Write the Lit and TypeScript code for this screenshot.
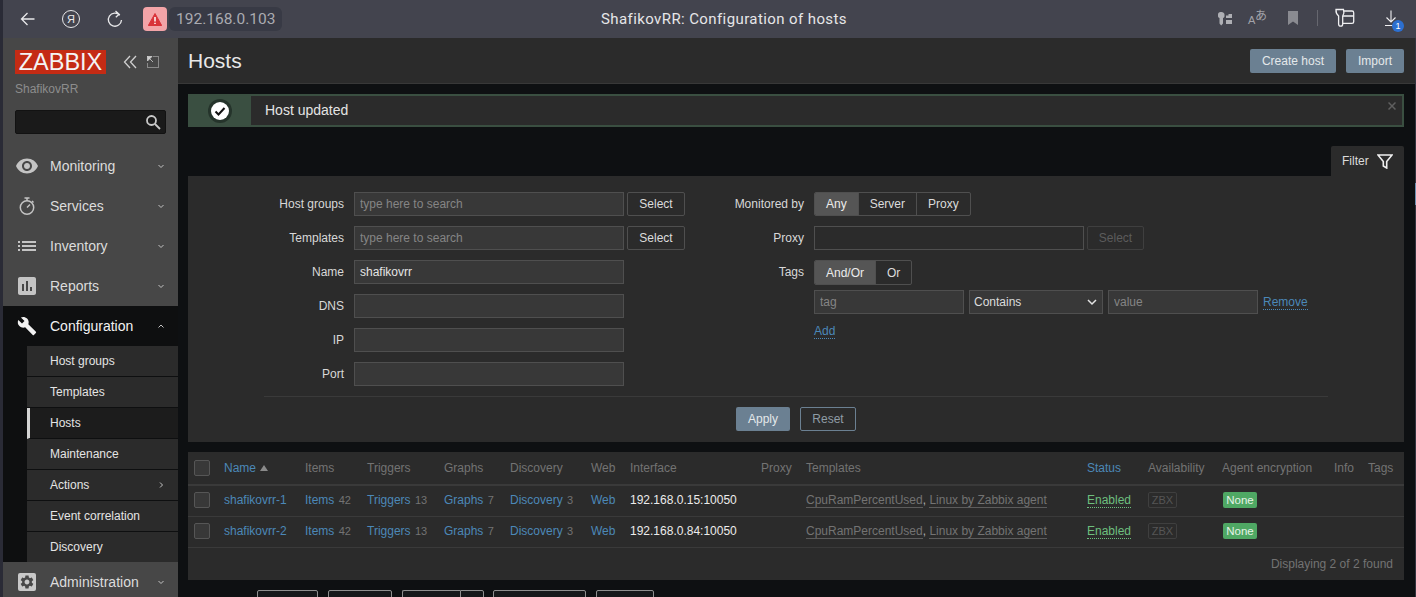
import { LitElement, html, css } from 'lit';
import { customElement } from 'lit/decorators.js';

const ICONS: Record<string, string> = {
  eye: 'M12 4.5C7 4.5 2.7 7.6 1 12c1.7 4.4 6 7.5 11 7.5s9.3-3.1 11-7.5c-1.7-4.4-6-7.5-11-7.5zM12 17c-2.8 0-5-2.2-5-5s2.2-5 5-5 5 2.2 5 5-2.2 5-5 5zm0-8c-1.7 0-3 1.3-3 3s1.3 3 3 3 3-1.3 3-3-1.3-3-3-3z',
  list: 'M3 13h2v-2H3v2zm0 4h2v-2H3v2zm0-8h2V7H3v2zm4 4h14v-2H7v2zm0 4h14v-2H7v2zM7 7v2h14V7H7z',
  chart: 'M19 3H5c-1.1 0-2 .9-2 2v14c0 1.1.9 2 2 2h14c1.1 0 2-.9 2-2V5c0-1.1-.9-2-2-2zM9 17H7v-7h2v7zm4 0h-2V7h2v10zm4 0h-2v-4h2v4z',
  wrench: 'M22.7 19l-9.1-9.1c.9-2.3.4-5-1.5-6.9-2-2-5-2.4-7.4-1.3L9 6 6 9 1.6 4.7C.4 7.1.9 10.1 2.9 12.1c1.9 1.9 4.6 2.4 6.9 1.5l9.1 9.1c.4.4 1 .4 1.4 0l2.3-2.3c.5-.4.5-1.1.1-1.4z',
};

const GEAR = 'M19.14 12.94c.04-.3.06-.61.06-.94 0-.32-.02-.64-.07-.94l2.03-1.58c.18-.14.23-.41.12-.61l-1.92-3.32c-.12-.22-.37-.29-.59-.22l-2.39.96c-.5-.38-1.03-.7-1.62-.94l-.36-2.54c-.04-.24-.24-.41-.48-.41h-3.84c-.24 0-.43.17-.47.41l-.36 2.54c-.59.24-1.13.57-1.62.94l-2.39-.96c-.22-.08-.47 0-.59.22L2.74 8.87c-.12.21-.08.47.12.61l2.03 1.58c-.05.3-.09.63-.09.94s.02.64.07.94l-2.03 1.58c-.18.14-.23.41-.12.61l1.92 3.32c.12.22.37.29.59.22l2.39-.96c.5.38 1.03.7 1.62.94l.36 2.54c.05.24.24.41.48.41h3.84c.24 0 .44-.17.47-.41l.36-2.54c.59-.24 1.13-.56 1.62-.94l2.39.96c.22.08.47 0 .59-.22l1.92-3.32c.12-.22.07-.47-.12-.61l-2.01-1.58zM12 15.6c-1.98 0-3.6-1.62-3.6-3.6s1.62-3.6 3.6-3.6 3.6 1.62 3.6 3.6-1.62 3.6-3.6 3.6z';

const chevron = (d: string) => html`<svg class="chev" width="8" height="8" viewBox="0 0 8 8"><path d=${d} fill="none" stroke="currentColor" stroke-width="1"/></svg>`;
const DOWN = 'M1.500 3 4 5.500 6.500 3';
const UP = 'M1.500 5.500 4 3 6.500 5.500';
const RIGHT = 'M3 1.500 5.500 4 3 6.500';

const mainIcon = (name: string) => {
  if (name === 'gear') {
    return html`<svg width="18" height="18" viewBox="0 0 18 18"><rect width="18" height="18" rx="2" fill="#c8c8c8"/><g transform="translate(.9 .9) scale(.675)"><path d=${GEAR} fill="#474747"/></g></svg>`;
  }
  if (name === 'timer') {
    return html`<svg width="18" height="18" viewBox="0 0 18 18" fill="none" stroke="currentColor" stroke-width="1.500"><circle cx="9" cy="10.500" r="6.700"/><path d="M6.500 1h5M9 1v3M9 10.500 12 7.500M14 4l1.500 1.500"/></svg>`;
  }
  const size = name === 'wrench' ? 20 : 24;
  return html`<svg width=${size} height=${size} viewBox="0 0 24 24"><path d=${ICONS[name]} fill="currentColor"/></svg>`;
};

const HEADS = ['Items', 'Triggers', 'Graphs', 'Discovery', 'Web', 'Interface', 'Proxy', 'Templates'];
const WIDTHS = [36, 81, 62, 77, 66, 81, 39, 131, 45, 281, 61, 74, 112, 34, 36];
const HOSTS = [
  { name: 'shafikovrr-1', ip: '192.168.0.15:10050' },
  { name: 'shafikovrr-2', ip: '192.168.0.84:10050' },
];
const SUBMENU = ['Host groups', 'Templates', 'Hosts', 'Maintenance', 'Actions', 'Event correlation', 'Discovery'];

@customElement('app-root')
export class AppRoot extends LitElement {
  static styles = css`
    :host {
      display: flex;
      flex-direction: column;
      width: 1416px;
      height: 597px;
      overflow: hidden;
      box-sizing: border-box;
      padding-left: 3px;
      background: #2a2b36;
      font-family: 'Liberation Sans', Arial, sans-serif;
      font-size: 12px;
      color: #e4e4e4;
    }
    * { box-sizing: border-box; }

    /* browser chrome */
    .chrome {
      flex: none;
      height: 38px;
      display: flex;
      align-items: center;
      background: #43444e;
      color: #e8e8ea;
    }
    .nav { display: flex; align-items: center; width: 137px; padding-left: 15px; }
    .nav svg { display: block; }
    .back { margin-left: 1px; margin-right: -1px; }
    .ya {
      width: 18px; height: 18px; margin-left: 26px; margin-right: 26px;
      border: 1.4px solid #e8e8ea; border-radius: 50%;
      display: flex; align-items: center; justify-content: center;
      font: 11px 'Liberation Sans', sans-serif;
    }
    .warn {
      width: 24px; height: 24px; margin-left: 3px; border-radius: 4px; background: #f3a4a8;
      display: flex; align-items: center; justify-content: center;
    }
    .addr {
      margin-left: 2px; width: 113px; height: 24px; border-radius: 6px; background: #383a45;
      color: #aaabb1; font: 15.5px/24px 'Roboto', sans-serif; padding-left: 7px;
    }
    .title {
      flex: 1; text-align: center; font: 400 15px 'Roboto', sans-serif; color: #e6e6e8;
      padding-right: 52px; letter-spacing: .4px;
    }
    .tools { width: 198px; flex: none; color: #aeafb4; position: relative; height: 38px; }
    .tools > * { position: absolute; }
    .badge {
      left: 174px; top: 20px; width: 12px; height: 12px; border-radius: 50%;
      background: #2c6fd0; color: #fff; font: 9px/12px 'Liberation Sans', sans-serif; text-align: center;
    }
    .tr-a { left: 30px; top: 14px; font: 11px 'Liberation Sans', sans-serif; color: #a2a3a9; }
    .tr-b { left: 37px; top: 6px; font: 12px 'Noto Sans CJK JP', sans-serif; color: #a2a3a9; }

    .page { flex: 1; display: flex; min-height: 0; }
    .rail { flex: none; width: 1px; background: linear-gradient(#33343f 145px, #6c8fb0 145px, #6c8fb0 167px, #33343f 167px); }

    /* sidebar */
    .side { flex: none; width: 175px; background: #474747; display: flex; flex-direction: column; overflow: hidden; }
    .side > * { flex: none; }
    .brand { display: flex; align-items: center; padding: 12px 0 0 12px; height: 36px; }
    .logo {
      width: 91px; height: 24px; background: #c42b14; color: #f4f4f4;
      font: 23.5px/24px 'Liberation Sans', sans-serif; text-align: center;
    }
    .brand svg { display: block; }
    .collapse { margin-left: 17px; }
    .expand { margin-left: 10px; }
    .server { padding: 8px 0 0 12px; height: 22px; line-height: 14px; color: #8d8d8d; font-size: 12px; }
    .search {
      margin: 14px 0 0 12px; width: 151px; height: 24px; background: #1a1a1a; border: 1px solid #121212;
      border-radius: 2px; display: flex; align-items: center; justify-content: flex-end; padding-right: 3px; color: #c9c9c9;
    }
    .menu { margin-top: 12px; }
    .item { height: 40px; display: flex; align-items: center; font-size: 14px; color: #dcdcdc; padding-right: 13px; }
    .item .ico { width: 47px; display: flex; justify-content: center; padding-left: 1px; color: #c4c4c4; flex: none; }
    .item .chev { margin-left: auto; color: #c4c4c4; }
    .item.open { background: #0e0f10; color: #f2f2f2; }
    .item.open .ico { color: #f2f2f2; }
    .sub { background: #0e0f10; padding-left: 24px; }
    .sub div {
      height: 31px; display: flex; align-items: center; padding: 0 13px 0 23px; background: #2b2b2b;
      border-bottom: 1px solid #0e0f10; color: #e4e4e4;
    }
    .sub div:last-child { border-bottom: 0; height: 30px; }
    .sub .cur { background: #1c1c1c; border-left: 3px solid #d4d4d4; padding-left: 20px; }
    .sub .chev { margin-left: auto; color: #c4c4c4; }

    /* main column */
    .main { flex: 1; min-width: 0; background: #0e1012; }
    .head {
      height: 46px; background: #2b2b2b; display: flex; align-items: center;
      padding: 1px 11px 0 10px; border-bottom: 1px solid #383838;
    }
    h1 { margin: 0; font-size: 21px; font-weight: 400; color: #e8e8e8; flex: 1; }
    .btn {
      height: 24px; padding: 0 12px; border-radius: 2px; background: #6b8092; color: #e4e8ea;
      display: inline-flex; align-items: center; justify-content: center; font-size: 12px;
    }
    .head .btn + .btn { margin-left: 10px; }
    .content { padding: 10px 11px 0 10px; }
    .msg {
      height: 33px; display: flex; background: #2b2b2b; border: 2px solid #3a4f41; position: relative;
    }
    .msg .mark { width: 61px; flex: none; background: #3a4f41; display: flex; align-items: center; justify-content: center; padding-right: 2px; }
    .msg .txt { padding-left: 14px; font-size: 14px; line-height: 29px; color: #e4e4e4; }
    .msg svg.x { position: absolute; right: 6px; top: 6px; }
    .tabs { display: flex; justify-content: flex-end; margin-top: 19px; }
    .tab {
      width: 73px; height: 30px; background: #2b2b2b; display: flex; align-items: center; padding-left: 11px; gap: 8px;
      border-radius: 2px 2px 0 0; color: #dcdcdc;
    }
    .filter { height: 266px; background: #2b2b2b; padding: 16px 76px 0 76px; }
    .cols { display: flex; height: 205px; border-bottom: 1px solid #3a3a3a; }
    .left { width: 421px; }
    .left .row, .right .row { display: flex; align-items: flex-start; }
    .lbl { text-align: right; padding-right: 10px; line-height: 24px; color: #d8d8d8; flex: none; }
    .left .lbl { width: 90px; }
    .right { margin-left: 49px; }
    .right .lbl { width: 80px; }
    .left .row { height: 34px; }
    .inp {
      height: 24px; background: #383838; border: 1px solid #4f4f4f; color: #e4e4e4; font: 12px 'Liberation Sans', sans-serif;
      padding: 0 5px; outline: 0; display: block; border-radius: 0;
    }
    .inp::placeholder { color: #858585; opacity: 1; }
    .w270 { width: 270px; }
    .w150 { width: 150px; }
    .empty { background: #2b2b2b; }
    .ghost {
      width: 58px; height: 24px; margin-left: 3px; border: 1px solid #4f4f4f; border-radius: 2px; background: #2b2b2b;
      color: #dcdcdc; display: inline-flex; align-items: center; justify-content: center;
    }
    .ghost.off { width: 57px; color: #5c5c5c; border-color: #3f3f3f; }
    .seg { display: flex; height: 24px; border: 1px solid #4f4f4f; border-radius: 2px; overflow: hidden; }
    .seg span { display: flex; align-items: center; padding: 0 11px; border-left: 1px solid #4f4f4f; color: #dcdcdc; }
    .seg span:first-child { border-left: 0; }
    .seg .on { background: #555; color: #ececec; }
    .seg.tall { height: 25px; }
    .tagrow { display: flex; gap: 5px; align-items: center; margin: 5px 0 0 80px; }
    .sel {
      width: 134px; height: 24px; background: #383838; border: 1px solid #4f4f4f; display: flex; align-items: center;
      justify-content: space-between; padding: 0 5px 0 4px; color: #dcdcdc;
    }
    a { color: #4b88b8; text-decoration: none; }
    a.dot { border-bottom: 1px dotted #4b88b8; line-height: 13px; }
    .tagrow a.dot { margin-top: 1px; }
    .add { margin: 10px 0 0 80px; height: 14px; }
    .actions { display: flex; justify-content: center; gap: 10px; padding-top: 10px; }
    .actions .ghost { margin: 0; width: 56px; border-color: #6b8092; color: #8f9ca6; }
    .filter .actions .btn { width: 54px; padding: 0; }

    .list { margin-top: 10px; height: 128px; background: #2b2b2b; }
    table { border-collapse: collapse; table-layout: fixed; width: 1216px; }
    th, td { padding: 0 0 1px; text-align: left; font-weight: 400; white-space: nowrap; overflow: visible; }
    th { height: 33px; color: #737373; border-bottom: 2px solid #3a3a3a; }
    td { height: 31px; border-bottom: 1px solid #3a3a3a; color: #ececec; }
    .ck { padding-left: 6px; }
    .box { width: 16px; height: 16px; border: 1px solid #565656; background: #383838; border-radius: 2px; display: block; }
    .num { color: #737373; font-size: 11px; margin-left: 1px; }
    .tri { display: inline-block; width: 0; height: 0; border: 4px solid transparent; border-top: 0; border-bottom: 6px solid #8a8a8a; margin-left: 4px; vertical-align: 1px; }
    .tpl { color: #737373; border-bottom: 1px solid #5c5c5c; }
    .comma { color: #b0b0b0; }
    .ok { color: #6dbf7e; border-bottom: 1px dotted #6dbf7e; }
    .zbx { display: inline-block; height: 16px; line-height: 14px; width: 29px; text-align: center; border: 1px solid #3f3f3f; border-radius: 2px; color: #565656; font-size: 11px; }
    .none { display: inline-block; height: 16px; line-height: 16px; width: 34px; margin-left: 1px; text-align: center; background: #4fa864; color: #e6f2e8; border-radius: 2px; font-size: 11.5px; }
    .count { text-align: right; padding: 9px 11px 0 0; color: #737373; }

    .pager { display: flex; margin: 10px 0 0 69px; gap: 10px; }
    .pager span { height: 24px; border: 1px solid #8f8f8f; border-radius: 2px; background: #16181a; }
    .pager .pair { display: flex; gap: 0; }
    .pager .pair span:first-child { border-radius: 2px 0 0 2px; border-right: 0; }
    .pager .pair span:last-child { border-radius: 0 2px 2px 0; }
    .pager .pair + span { margin-left: -1px; }
  `;

  private menuItem(icon: string, label: string, open = false) {
    return html`<div class="item ${open ? 'open' : ''}">
      <span class="ico">${mainIcon(icon)}</span>${label}${chevron(open ? UP : DOWN)}
    </div>`;
  }

  private chrome() {
    return html`<div class="chrome">
      <div class="nav">
        <svg class="back" width="18" height="18" viewBox="0 0 18 18"><path d="M15.500 9H2.500M8.500 3 2.500 9l6 6" fill="none" stroke="currentColor" stroke-width="1.300"/></svg>
        <span class="ya">Я</span>
        <svg width="18" height="18" viewBox="0 0 18 18"><path d="M13.800 5.200A6.600 6.600 0 1 0 15.500 10M9.500 1l3.600 3.200-3.300 3.100" fill="none" stroke="currentColor" stroke-width="1.300"/></svg>
      </div>
      <div class="warn"><svg width="14" height="13" viewBox="0 0 14 13"><path d="M7 .5 13.700 12.500H.3z" fill="#d9333a" stroke="#d9333a" stroke-linejoin="round"/><path d="M7 4v4.400M7 9.700v1.300" stroke="#fff" stroke-width="1.500"/></svg></div>
      <div class="addr">192.168.0.103</div>
      <div class="title">ShafikovRR: Configuration of hosts</div>
      <div class="tools">
        <svg style="left:0;top:12px" width="14" height="14" viewBox="0 0 14 14"><path d="M0 2.500C0 1 1 0 2.500 0h1C5 0 6.500 1 6.500 2.500V4c0 1-.5 1.700-1.500 2v5.500L3.200 13.500 1.500 11.500V6C.5 5.700 0 5 0 4z" fill="currentColor"/><path d="M8 3.500h2.500V2H14v4H8zM8 8h6v4H8z" fill="currentColor"/></svg>
        <span class="tr-a">A</span><span class="tr-b">あ</span>
        <svg style="left:70px;top:11px" width="10" height="14" viewBox="0 0 10 14"><path d="M0 0h10v14L5 10.500 0 14z" fill="#8a8b91"/></svg>
        <span style="left:99px;top:10px;width:1px;height:16px;background:#66676f"></span>
        <svg style="left:117px;top:8px" width="20" height="19" viewBox="0 0 20 19" fill="none" stroke="#f0f0f2" stroke-width="1.300"><path d="M1 1.500h7.500c1 3 .5 4.500-.8 6.500v8c0 1.500-.8 2.200-2 2.200S3.600 17.500 3.600 16V8C1.600 6.300.8 4 1 1.500z"/><path d="M9 3h8c1 0 1.700.7 1.700 1.700v9c0 1-.7 1.700-1.700 1.700H8M8 8h10.500"/></svg>
        <svg style="left:167px;top:10px" width="12" height="17" viewBox="0 0 12 17" fill="none" stroke="#f0f0f2" stroke-width="1.100"><path d="M6 .5V12M1.500 7.500 6 12l4.500-4.500M0 15.500h12"/></svg>
        <span class="badge">1</span>
      </div>
    </div>`;
  }

  private sidebar() {
    return html`<aside class="side">
      <div class="brand">
        <div class="logo">ZABBIX</div>
        <svg class="collapse" width="14" height="14" viewBox="0 0 14 14" fill="none" stroke="#cfcfcf" stroke-width="1.300"><path d="M7 1 1.500 7 7 13M13 1 7.500 7 13 13"/></svg>
        <svg class="expand" width="12" height="12" viewBox="0 0 12 12" fill="none" stroke="#cfcfcf"><path d="M6.500.5h5v11H.500V6.500" stroke-dasharray="1 1"/><path d="M.500.500 6 6M0 .500h5L.500 5V0z" fill="#cfcfcf" stroke-width=".8"/></svg>
      </div>
      <div class="server">ShafikovRR</div>
      <div class="search">
        <svg width="18" height="18" viewBox="0 0 18 18" fill="none" stroke="currentColor" stroke-width="1.800"><circle cx="7.500" cy="7.500" r="4.500"/><path d="m11 11 5 5"/></svg>
      </div>
      <div class="menu">
        ${this.menuItem('eye', 'Monitoring')}
        ${this.menuItem('timer', 'Services')}
        ${this.menuItem('list', 'Inventory')}
        ${this.menuItem('chart', 'Reports')}
        ${this.menuItem('wrench', 'Configuration', true)}
        <div class="sub">
          ${SUBMENU.map(
            (s) => html`<div class=${s === 'Hosts' ? 'cur' : ''}>${s}${s === 'Actions' ? chevron(RIGHT) : ''}</div>`,
          )}
        </div>
        ${this.menuItem('gear', 'Administration')}
      </div>
    </aside>`;
  }

  private filter() {
    return html`<div class="filter">
      <div class="cols">
        <div class="left">
          <div class="row"><span class="lbl">Host groups</span><input class="inp w270" placeholder="type here to search" /><span class="ghost">Select</span></div>
          <div class="row"><span class="lbl">Templates</span><input class="inp w270" placeholder="type here to search" /><span class="ghost">Select</span></div>
          <div class="row"><span class="lbl">Name</span><input class="inp w270" value="shafikovrr" /></div>
          <div class="row"><span class="lbl">DNS</span><input class="inp w270" /></div>
          <div class="row"><span class="lbl">IP</span><input class="inp w270" /></div>
          <div class="row"><span class="lbl">Port</span><input class="inp w270" /></div>
        </div>
        <div class="right">
          <div class="row" style="height:34px"><span class="lbl">Monitored by</span>
            <div class="seg"><span class="on">Any</span><span>Server</span><span>Proxy</span></div></div>
          <div class="row" style="height:34px"><span class="lbl">Proxy</span><input class="inp w270 empty" /><span class="ghost off">Select</span></div>
          <div class="row"><span class="lbl">Tags</span>
            <div class="seg tall"><span class="on">And/Or</span><span>Or</span></div></div>
          <div class="tagrow">
            <input class="inp w150" placeholder="tag" />
            <div class="sel">Contains<svg width="10" height="10" viewBox="0 0 10 10"><path d="M1 3l4 4 4-4" fill="none" stroke="#e4e4e4" stroke-width="1.500"/></svg></div>
            <input class="inp w150" placeholder="value" />
            <a class="dot">Remove</a>
          </div>
          <div class="add"><a class="dot">Add</a></div>
        </div>
      </div>
      <div class="actions"><span class="btn">Apply</span><span class="ghost">Reset</span></div>
    </div>`;
  }

  private hostTable() {
    return html`<div class="list">
      <table>
        <colgroup>${WIDTHS.map((w) => html`<col style="width:${w}px" />`)}</colgroup>
        <thead><tr>
          <th class="ck"><span class="box"></span></th>
          <th><a>Name</a><span class="tri"></span></th>
          ${HEADS.map((h) => html`<th>${h}</th>`)}
          <th><a>Status</a></th><th>Availability</th><th>Agent encryption</th><th>Info</th><th>Tags</th>
        </tr></thead>
        <tbody>
          ${HOSTS.map(
            (h) => html`<tr>
              <td class="ck"><span class="box"></span></td>
              <td><a>${h.name}</a></td>
              <td><a>Items</a> <span class="num">42</span></td>
              <td><a>Triggers</a> <span class="num">13</span></td>
              <td><a>Graphs</a> <span class="num">7</span></td>
              <td><a>Discovery</a> <span class="num">3</span></td>
              <td><a>Web</a></td>
              <td>${h.ip}</td>
              <td></td>
              <td><span class="tpl">CpuRamPercentUsed</span><span class="comma">, </span><span class="tpl">Linux by Zabbix agent</span></td>
              <td><span class="ok">Enabled</span></td>
              <td><span class="zbx">ZBX</span></td>
              <td><span class="none">None</span></td>
              <td></td><td></td>
            </tr>`,
          )}
        </tbody>
      </table>
      <div class="count">Displaying 2 of 2 found</div>
    </div>`;
  }

  render() {
    return html`
      ${this.chrome()}
      <div class="page">
        ${this.sidebar()}
        <main class="main">
          <div class="head">
            <h1>Hosts</h1>
            <span class="btn">Create host</span><span class="btn">Import</span>
          </div>
          <div class="content">
            <div class="msg">
              <div class="mark">
                <svg width="24" height="24" viewBox="0 0 24 24"><circle cx="12" cy="12" r="12" fill="#25342b"/><circle cx="12" cy="12" r="9" fill="#fff"/><path d="m7.500 12.500 3 3 6-6.500" fill="none" stroke="#111" stroke-width="2"/></svg>
              </div>
              <div class="txt">Host updated</div>
              <svg class="x" width="8" height="8" viewBox="0 0 8 8"><path d="M.5.500l7 7m0-7-7 7" stroke="#5f5f5f" stroke-width="1.500"/></svg>
            </div>
            <div class="tabs">
              <div class="tab">Filter
                <svg width="16" height="15" viewBox="0 0 16 15"><path d="M1 1h14L9.700 7.500V14L6.300 12V7.500z" fill="none" stroke="#efefef" stroke-width="1.600"/></svg>
              </div>
            </div>
            ${this.filter()}
            ${this.hostTable()}
            <div class="pager">
              <span style="width:61px"></span><span style="width:64px"></span>
              <div class="pair"><span style="width:58px"></span><span style="width:24px"></span></div>
              <span style="width:93px"></span><span style="width:58px"></span>
            </div>
          </div>
        </main>
        <div class="rail"></div>
      </div>
    `;
  }
}
